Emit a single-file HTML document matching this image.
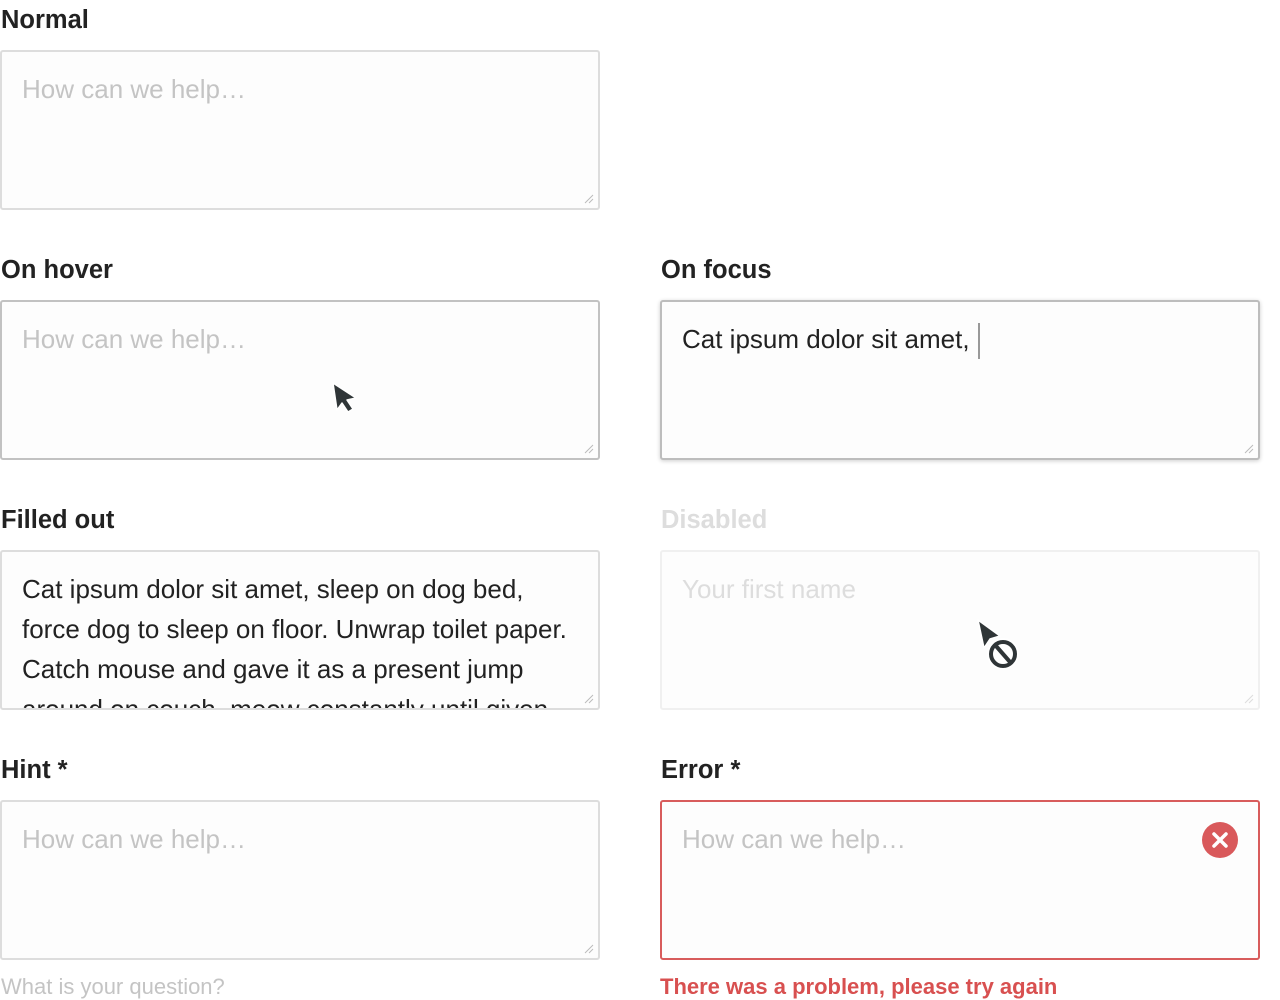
<!DOCTYPE html>
<html><head><meta charset="utf-8"><style>
*{box-sizing:border-box;margin:0;padding:0}
body{width:1280px;height:1000px;background:#fff;font-family:"Liberation Sans",Arial,sans-serif;position:relative;overflow:hidden}
.lbl{position:absolute;font-size:25.5px;font-weight:bold;color:#222;line-height:28px}
.box{position:absolute;width:600px;height:160px;border:2px solid #ddd;border-radius:3px;background:#fdfdfd;overflow:hidden;padding:17px 20px;font-size:26px;line-height:40px;color:#222;white-space:nowrap}
.ph{color:#c4c4c4}
.grip{position:absolute;right:4px;bottom:4px;width:10px;height:10px}
.sub{position:absolute;font-size:22px;line-height:24px}
</style></head><body>
<div class="lbl" style="left:1px;top:6px">Normal</div>
<div class="box" style="left:0;top:50px"><span class="ph">How can we help…</span>
<svg class="grip" viewBox="0 0 10 10"><path d="M1 9L9 1M5 9L9 5" stroke="#bbb" stroke-width="1"/></svg></div>

<div class="lbl" style="left:1px;top:256px">On hover</div>
<div class="box" style="left:0;top:300px;border-color:#c2c2c2"><span class="ph">How can we help…</span>
<svg class="grip" viewBox="0 0 10 10"><path d="M1 9L9 1M5 9L9 5" stroke="#bbb" stroke-width="1"/></svg></div>
<svg style="position:absolute;left:328px;top:378px" width="36" height="40" viewBox="0 0 36 40"><path d="M5 5L9 32L14 25L20 34L25 31L19 22L28 20Z" fill="#2f3537" stroke="#fff" stroke-width="1.5" stroke-linejoin="round"/></svg>

<div class="lbl" style="left:661px;top:256px">On focus</div>
<div class="box" style="left:660px;top:300px;border-color:#bdbdbd;box-shadow:0 1px 4px rgba(0,0,0,.2)">Cat ipsum dolor sit amet, <span style="display:inline-block;width:2px;height:36px;background:#999;vertical-align:middle;margin-left:1px"></span>
<svg class="grip" viewBox="0 0 10 10"><path d="M1 9L9 1M5 9L9 5" stroke="#bbb" stroke-width="1"/></svg></div>

<div class="lbl" style="left:1px;top:506px">Filled out</div>
<div class="box" style="left:0;top:550px">Cat ipsum dolor sit amet, sleep on dog bed,<br>force dog to sleep on floor. Unwrap toilet paper.<br>Catch mouse and gave it as a present jump<br>around on couch, meow constantly until given
<svg class="grip" viewBox="0 0 10 10"><path d="M1 9L9 1M5 9L9 5" stroke="#bbb" stroke-width="1"/></svg></div>

<div class="lbl" style="left:661px;top:506px;color:#ddd">Disabled</div>
<div class="box" style="left:660px;top:550px;border-color:#f0f0f0"><span style="color:#ddd">Your first name</span>
<svg class="grip" viewBox="0 0 10 10"><path d="M1 9L9 1M5 9L9 5" stroke="#ddd" stroke-width="1"/></svg></div>
<svg style="position:absolute;left:972px;top:616px" width="54" height="58" viewBox="0 0 54 58"><path d="M6 4L12 32L18 23L28 20Z" fill="#2f3537" stroke="#fff" stroke-width="1.5" stroke-linejoin="round"/><circle cx="31" cy="38" r="16" fill="#fff" opacity=".95"/><circle cx="31" cy="38" r="12" fill="none" stroke="#2f3537" stroke-width="4"/><path d="M24 30L38 46" stroke="#2f3537" stroke-width="4"/></svg>

<div class="lbl" style="left:1px;top:756px">Hint *</div>
<div class="box" style="left:0;top:800px"><span class="ph">How can we help…</span>
<svg class="grip" viewBox="0 0 10 10"><path d="M1 9L9 1M5 9L9 5" stroke="#bbb" stroke-width="1"/></svg></div>
<div class="sub" style="left:1px;top:975px;color:#c4c4c4">What is your question?</div>

<div class="lbl" style="left:661px;top:756px">Error *</div>
<div class="box" style="left:660px;top:800px;border-color:#d85c5c"><span class="ph">How can we help…</span></div>
<svg style="position:absolute;left:1202px;top:822px" width="36" height="36" viewBox="0 0 36 36"><circle cx="18" cy="18" r="18" fill="#d9595b"/><path d="M12 12L24 24M24 12L12 24" stroke="#fff" stroke-width="3.5" stroke-linecap="round"/></svg>
<div class="sub" style="left:660px;top:975px;color:#d85050;font-weight:bold">There was a problem, please try again</div>
</body></html>
